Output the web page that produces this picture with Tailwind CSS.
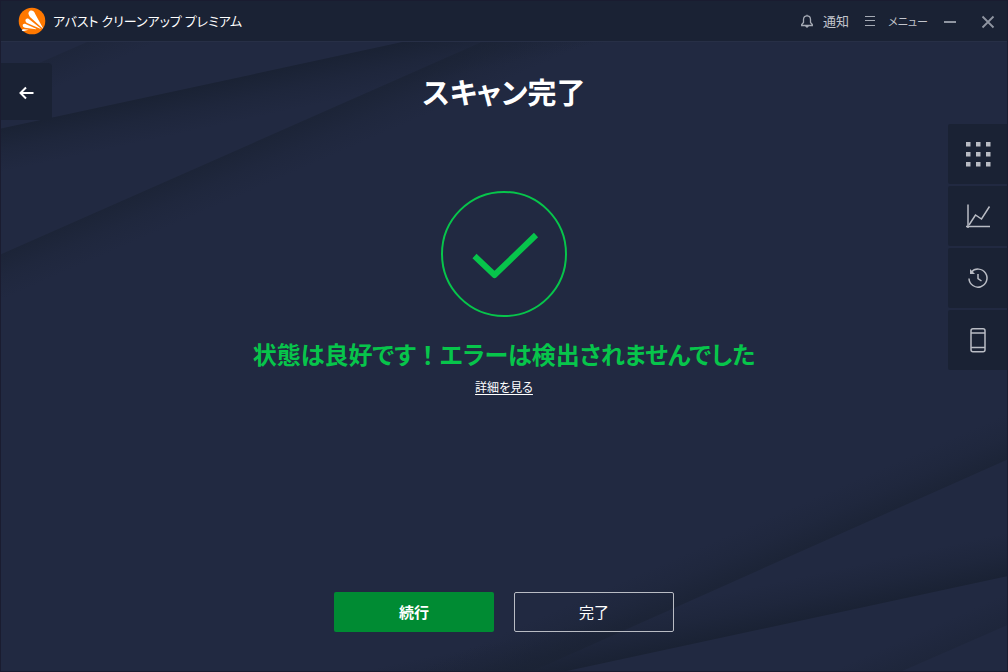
<!DOCTYPE html>
<html lang="ja">
<head>
  <meta charset="UTF-8">
  <meta name="viewport" content="width=device-width, initial-scale=1.0">
  <title>アバスト クリーンアップ プレミアム</title>
  <script src="https://cdn.jsdelivr.net/npm/@tailwindcss/browser@4"></script>
</head>
<body class="relative isolate flex flex-col min-h-screen border border-[#1a1c30] bg-[#212941] text-white font-['Noto_Sans_CJK_JP',sans-serif] [font-feature-settings:'palt']">

  <!-- Background rays -->
  <svg class="absolute inset-0 -z-10 w-full h-full" viewBox="0 0 1008 672" preserveAspectRatio="none" aria-hidden="true">
    <defs>
      <linearGradient id="rayA" gradientUnits="userSpaceOnUse" x1="0" y1="128" x2="9" y2="170">
        <stop offset="0" stop-color="#1a2234"/>
        <stop offset="0.5" stop-color="#1a2234" stop-opacity="0.400"/>
        <stop offset="1" stop-color="#1a2234" stop-opacity="0"/>
      </linearGradient>
      <linearGradient id="rayB" gradientUnits="userSpaceOnUse" x1="0" y1="254" x2="17" y2="293">
        <stop offset="0" stop-color="#1b2335" stop-opacity="0.800"/>
        <stop offset="0.5" stop-color="#1b2335" stop-opacity="0.300"/>
        <stop offset="1" stop-color="#1b2335" stop-opacity="0"/>
      </linearGradient>
      <linearGradient id="rayC" gradientUnits="userSpaceOnUse" x1="0" y1="79" x2="12" y2="106">
        <stop offset="0" stop-color="#1b2335" stop-opacity="0.500"/>
        <stop offset="1" stop-color="#1b2335" stop-opacity="0"/>
      </linearGradient>
      <linearGradient id="rayD" gradientUnits="userSpaceOnUse" x1="1008" y1="577" x2="999" y2="535">
        <stop offset="0" stop-color="#1a2234"/>
        <stop offset="0.5" stop-color="#1a2234" stop-opacity="0.400"/>
        <stop offset="1" stop-color="#1a2234" stop-opacity="0"/>
      </linearGradient>
      <linearGradient id="rayE" gradientUnits="userSpaceOnUse" x1="1008" y1="460" x2="991" y2="421">
        <stop offset="0" stop-color="#1b2335" stop-opacity="0.800"/>
        <stop offset="0.5" stop-color="#1b2335" stop-opacity="0.300"/>
        <stop offset="1" stop-color="#1b2335" stop-opacity="0"/>
      </linearGradient>
      <linearGradient id="rayF" gradientUnits="userSpaceOnUse" x1="1008" y1="626" x2="996" y2="599">
        <stop offset="0" stop-color="#1b2335" stop-opacity="0.500"/>
        <stop offset="1" stop-color="#1b2335" stop-opacity="0"/>
      </linearGradient>
    </defs>
    <path fill="url(#rayC)" d="M0 79 180 0H593L0 128z"/>
    <path fill="url(#rayA)" d="M0 128 593 0H1008V300H0z"/>
    <path fill="url(#rayB)" d="M0 254 575 0H1008V400H0z"/>
    <path fill="url(#rayF)" d="M1008 626 903 672H567L1008 577z"/>
    <path fill="url(#rayD)" d="M1008 577 567 672H0V380H1008z"/>
    <path fill="url(#rayE)" d="M1008 460 533 672H0V300H1008z"/>
  </svg>

  <!-- Title bar -->
  <header class="flex items-center justify-between h-[41px] pl-[17px] pr-[11px] bg-[#1a2234] border-b border-[#272f46]">
    <div class="flex items-center gap-[7px]">
      <svg class="w-7 h-7" viewBox="0 0 28 28" aria-hidden="true">
        <circle cx="14" cy="14" r="13.3" fill="#ff7800"/>
        <g fill="#fff">
          <path d="M10.700 7.600C9.600 4.800 12.800 2.200 15.500 4.200c.9.700 1.300 1.600 1.700 2.700L24.900 21c.2.500-.1.700-.5.300L12 10c-.6-.6-1-1.500-1.300-2.400z"/>
          <path d="M7.500 14c-.5-1.900 1.600-3.200 3.300-2l11.700 9.300c.3.300.1.700-.3.500L9 16c-.8-.4-1.300-1.100-1.500-2z"/>
          <path d="M4.700 18.600c-.1-1.500 1.500-2.300 2.900-1.600l10.600 4.700c.3.200.2.500-.2.500L6.900 20.700c-1.300-.2-2.100-.9-2.200-2.100z"/>
          <path d="M3.800 23.200c.4-.9 1.400-1.200 2.500-1l4.400.5-4.800 1.400c-.8.200-1.600-.2-2.100-.9z"/>
        </g>
      </svg>
      <span class="text-[13px] leading-5">アバスト クリーンアップ プレミアム</span>
    </div>
    <div class="flex items-center gap-4 text-[#c2c5cc]">
      <button class="flex items-center gap-2 text-[13px] leading-5">
        <svg class="w-4 h-4" viewBox="0 0 16 16" fill="none" stroke="#a6abb5" stroke-width="1.300" aria-hidden="true">
          <path d="M2.700 12.500v-1L4.500 9.500V6.500C4.500 4 5.900 2.800 8 2.800S11.500 4 11.500 6.500v3l1.800 2v1zM8 2.800V1.800"/>
          <path d="M6.800 13h2.400L8 14.200z" fill="#a6abb5"/>
        </svg>
        通知
      </button>
      <button class="flex items-center gap-[13px] text-[11px] leading-5">
        <svg class="w-[10px] h-3" viewBox="0 0 10 12" stroke="#a6abb5" stroke-width="1" aria-hidden="true">
          <path d="M0 1.500h10M0 5.500h10M0 10.500h10"/>
        </svg>
        メニュー
      </button>
      <button aria-label="最小化">
        <svg class="block w-3 h-4" viewBox="0 0 12 16"><path d="M0 9h12" stroke="#9096a2" stroke-width="2"/></svg>
      </button>
      <button class="ml-2" aria-label="閉じる">
        <svg class="block w-4 h-4" viewBox="0 0 16 16"><path d="M2.500 3.500l11 11m0-11l-11 11" stroke="#9096a2" stroke-width="1.800"/></svg>
      </button>
    </div>
  </header>

  <main class="flex-1 grid grid-cols-[59px_1fr_59px]">
    <div class="pt-[21px]">
      <button class="flex items-center justify-center w-[51px] h-[57px] rounded-tr bg-[#1a2234]" aria-label="戻る">
        <svg class="w-4 h-4 mt-[3px]" viewBox="0 0 16 16" fill="none" stroke="#fff" stroke-width="2" aria-hidden="true">
          <path d="M14.500 8H1.500M7 2.500 1.500 8 7 13.500"/>
        </svg>
      </button>
    </div>

    <section class="flex flex-col items-center pb-[39px]">
      <h1 class="mt-[25px] text-[29px] leading-[48px] font-bold">スキャン完了</h1>
      <svg class="mt-[76px] w-[126px] h-[126px]" viewBox="0 0 126 126" fill="none" stroke="#07c54b" aria-hidden="true">
        <circle cx="63" cy="63" r="62" stroke-width="2"/>
        <path d="M33.500 65 53.500 84 95 44" stroke-width="6" stroke-linejoin="round"/>
      </svg>
      <h2 class="mt-5 text-[24px] leading-[34px] font-bold text-[#07c54b]">状態は良好です<span class="[font-feature-settings:normal]">！</span>エラーは検出されませんでした</h2>
      <a href="#" class="mt-[6px] text-[12px] leading-5 underline underline-offset-2">詳細を見る</a>
      <div class="mt-auto flex gap-5 text-[15px] leading-5">
        <button class="w-40 h-10 rounded-xs bg-[#008b33] font-bold">続行</button>
        <button class="w-40 h-10 rounded-xs border border-[#b9bcc4]">完了</button>
      </div>
    </section>

    <nav class="flex flex-col gap-[2px] pt-[82px] text-[#b9bcc4]">
      <button class="flex items-center justify-center h-[60px] rounded-l-xs bg-[#1a2234]" aria-label="すべての機能">
        <svg class="w-7 h-7" viewBox="0 0 28 28" fill="currentColor">
          <path d="M2 2h4.500v4.500H2zM12 2h4.500v4.500H12zM22 2h4.500v4.500H22zM2 12h4.500v4.500H2zM12 12h4.500v4.500H12zM22 12h4.500v4.500H22zM2 22h4.500v4.500H2zM12 22h4.500v4.500H12zM22 22h4.500v4.500H22z"/>
        </svg>
      </button>
      <button class="flex items-center justify-center h-[60px] rounded-l-xs bg-[#1a2234]" aria-label="統計">
        <svg class="w-7 h-7" viewBox="0 0 28 28" fill="none" stroke="currentColor" stroke-width="1.500">
          <path d="M4 2.500v23.500M2 24.500h24"/>
          <path d="M5 23l6.500-10 6 4L25.500 4.500"/>
        </svg>
      </button>
      <button class="flex items-center justify-center h-[60px] rounded-l-xs bg-[#1a2234]" aria-label="履歴">
        <svg class="w-7 h-7" viewBox="0 0 28 28" fill="none" stroke="currentColor" stroke-width="1.500">
          <path d="M5 14.500A9 9 0 1 0 7.200 8.200M14 10v4.500l3.500 2.500"/>
          <path d="M6 5v5h5z" fill="currentColor" stroke="none"/>
        </svg>
      </button>
      <button class="flex items-center justify-center h-[60px] rounded-l-xs bg-[#1a2234]" aria-label="モバイル">
        <svg class="w-7 h-7" viewBox="0 0 28 28" fill="none" stroke="currentColor" stroke-width="1.500">
          <rect x="7" y="2.800" width="14" height="23" rx="2"/>
          <path d="M7 7h14M7 21.500h14"/>
        </svg>
      </button>
    </nav>
  </main>
</body>
</html>
